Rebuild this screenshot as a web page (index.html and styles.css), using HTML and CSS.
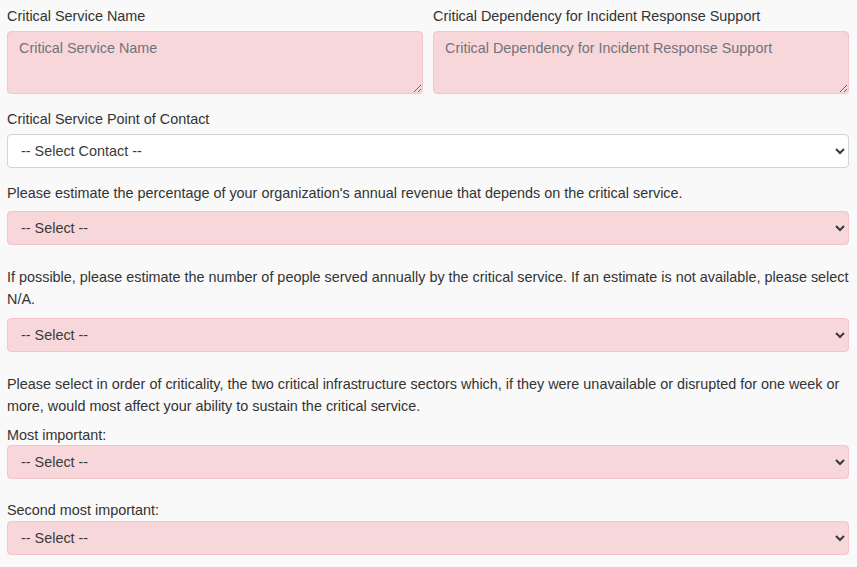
FILE: index.html
```html
<!DOCTYPE html>
<html lang="en">
<head>
<meta charset="utf-8">
<title>Critical Service</title>
<link rel="stylesheet" href="styles.css">
</head>
<body>
<form class="form">
  <div class="row">
    <div class="group half">
      <label class="label" for="csn">Critical Service Name</label>
      <textarea id="csn" class="field pink area" placeholder="Critical Service Name"></textarea>
    </div>
    <div class="group half">
      <label class="label" for="cdr">Critical Dependency for Incident Response Support</label>
      <textarea id="cdr" class="field pink area" placeholder="Critical Dependency for Incident Response Support"></textarea>
    </div>
  </div>

  <div class="group">
    <label class="label" for="poc">Critical Service Point of Contact</label>
    <select id="poc" class="field white"><option>-- Select Contact --</option></select>
  </div>

  <div class="group wide">
    <label class="label q" for="rev">Please estimate the percentage of your organization's annual revenue that depends on the critical service.</label>
    <select id="rev" class="field pink"><option>-- Select --</option></select>
  </div>

  <div class="group wide">
    <label class="label q2" for="ppl">If possible, please estimate the number of people served annually by the critical service. If an estimate is not available, please select N/A.</label>
    <select id="ppl" class="field pink"><option>-- Select --</option></select>
  </div>

  <div class="group wide">
    <p class="para">Please select in order of criticality, the two critical infrastructure sectors which, if they were unavailable or disrupted for one week or more, would most affect your ability to sustain the critical service.</p>
    <label class="label tight" for="s1">Most important:</label>
    <select id="s1" class="field pink"><option>-- Select --</option></select>
  </div>

  <div class="group">
    <label class="label tight2" for="s2">Second most important:</label>
    <select id="s2" class="field pink"><option>-- Select --</option></select>
  </div>
</form>
</body>
</html>
```

FILE: styles.css
```css
html, body {
  margin: 0;
  padding: 0;
  background: #f9f9f9;
}
body {
  font-family: "Liberation Sans", Arial, sans-serif;
  font-size: 14.4px;
  line-height: 20px;
  color: #333;
}
.form {
  padding: 6px 8px 0 7px;
  display: flex;
  flex-direction: column;
}
.row {
  display: flex;
  gap: 10px;
}
.half {
  flex: 1 1 0;
  min-width: 0;
}
.group {
  display: flex;
  flex-direction: column;
  margin-bottom: 15px;
}
.wide {
  margin-bottom: 21px;
}
.label {
  display: block;
  margin-bottom: 5px;
  font-weight: normal;
}
.q {
  margin-bottom: 8px;
}
.q2 {
  line-height: 22px;
  margin-bottom: 8px;
}
.para {
  margin: 0 0 8px;
  line-height: 22px;
}
.tight {
  margin-bottom: 0;
}
.tight2 {
  margin-bottom: 1px;
}
.field {
  box-sizing: border-box;
  width: 100%;
  font-family: "Liberation Sans", Arial, sans-serif;
  font-size: 14.4px;
  line-height: 20px;
  color: #3a3a3a;
  border-radius: 4px;
  padding: 6px 12px 6px 9px;
  margin: 0;
}
select.field {
  height: 34px;
}
.area {
  height: 63px;
  resize: vertical;
  display: block;
  padding-left: 11px;
}
.area::placeholder {
  color: #6f747b;
  opacity: 1;
}
.pink {
  background-color: #f8d7da;
  border: 1px solid #f3c4c8;
}
.white {
  background-color: #fff;
  border: 1px solid #ced4da;
}
```
